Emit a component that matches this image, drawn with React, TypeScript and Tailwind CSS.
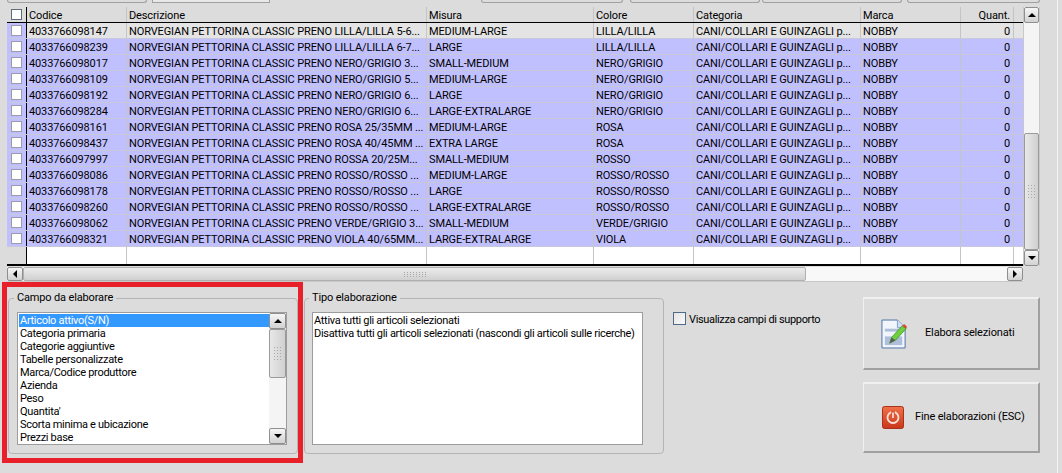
import React from "react";

const rows = [
  ["4033766098147", "NORVEGIAN PETTORINA CLASSIC PRENO LILLA/LILLA 5-6...", "MEDIUM-LARGE", "LILLA/LILLA"],
  ["4033766098239", "NORVEGIAN PETTORINA CLASSIC PRENO LILLA/LILLA 6-7...", "LARGE", "LILLA/LILLA"],
  ["4033766098017", "NORVEGIAN PETTORINA CLASSIC PRENO NERO/GRIGIO 3...", "SMALL-MEDIUM", "NERO/GRIGIO"],
  ["4033766098109", "NORVEGIAN PETTORINA CLASSIC PRENO NERO/GRIGIO 5...", "MEDIUM-LARGE", "NERO/GRIGIO"],
  ["4033766098192", "NORVEGIAN PETTORINA CLASSIC PRENO NERO/GRIGIO 6...", "LARGE", "NERO/GRIGIO"],
  ["4033766098284", "NORVEGIAN PETTORINA CLASSIC PRENO NERO/GRIGIO 6...", "LARGE-EXTRALARGE", "NERO/GRIGIO"],
  ["4033766098161", "NORVEGIAN PETTORINA CLASSIC PRENO ROSA 25/35MM ...", "MEDIUM-LARGE", "ROSA"],
  ["4033766098437", "NORVEGIAN PETTORINA CLASSIC PRENO ROSA 40/45MM ...", "EXTRA LARGE", "ROSA"],
  ["4033766097997", "NORVEGIAN PETTORINA CLASSIC PRENO ROSSA 20/25M...", "SMALL-MEDIUM", "ROSSO"],
  ["4033766098086", "NORVEGIAN PETTORINA CLASSIC PRENO ROSSO/ROSSO ...", "MEDIUM-LARGE", "ROSSO/ROSSO"],
  ["4033766098178", "NORVEGIAN PETTORINA CLASSIC PRENO ROSSO/ROSSO ...", "LARGE", "ROSSO/ROSSO"],
  ["4033766098260", "NORVEGIAN PETTORINA CLASSIC PRENO ROSSO/ROSSO ...", "LARGE-EXTRALARGE", "ROSSO/ROSSO"],
  ["4033766098062", "NORVEGIAN PETTORINA CLASSIC PRENO VERDE/GRIGIO 3...", "SMALL-MEDIUM", "VERDE/GRIGIO"],
  ["4033766098321", "NORVEGIAN PETTORINA CLASSIC PRENO VIOLA 40/65MM...", "LARGE-EXTRALARGE", "VIOLA"],
];

const campi = [
  "Articolo attivo(S/N)",
  "Categoria primaria",
  "Categorie aggiuntive",
  "Tabelle personalizzate",
  "Marca/Codice produttore",
  "Azienda",
  "Peso",
  "Quantita'",
  "Scorta minima e ubicazione",
  "Prezzi base",
];

const gridCols = "grid grid-cols-[20px_100px_300px_167px_100px_167px_100px_53px_8px]";
const cell = "border-r border-[#c4c4c4] pl-[2px] pr-[3px] overflow-hidden whitespace-nowrap";

function Arrow({ dir }: { dir: "up" | "down" | "left" | "right" }) {
  const pts = {
    up: "4,1 0,5 8,5",
    down: "0,1 8,1 4,5",
    left: "5,0 5,8 1,4",
    right: "1,0 1,8 5,4",
  }[dir];
  const horizontal = dir === "left" || dir === "right";
  return (
    <svg width={horizontal ? 6 : 8} height={horizontal ? 8 : 6} viewBox={horizontal ? "0 0 6 8" : "0 0 8 6"}>
      <polygon points={pts} fill="#000" />
    </svg>
  );
}

function ScrollButton({ dir, className }: { dir: "up" | "down" | "left" | "right"; className: string }) {
  return (
    <div className={`flex items-center justify-center shrink-0 border border-[#8e8f8f] rounded-[2px] bg-gradient-to-b from-[#f6f6f6] to-[#d2d2d2] ${className}`}>
      <Arrow dir={dir} />
    </div>
  );
}

function Grip({ vertical }: { vertical?: boolean }) {
  return (
    <div className={vertical ? "grid grid-cols-3 gap-[2px]" : "grid grid-rows-3 grid-flow-col gap-[1px] gap-x-[2px]"}>
      {Array.from({ length: vertical ? 15 : 24 }).map((_, i) => (
        <div key={i} className="w-px h-px bg-[#a8a8a8]" />
      ))}
    </div>
  );
}

function Check({ className = "" }: { className?: string }) {
  return <div className={`w-[11px] h-[11px] border border-[#5f6b78] bg-white ${className}`} />;
}

function Group({ title, className, children }: { title: string; className: string; children: React.ReactNode }) {
  return (
    <fieldset className={`border border-[#b4b4b4] rounded-[4px] ${className}`}>
      <legend className="-ml-[3px] px-[3px] leading-[14px] text-[11px] tracking-[-0.15px]">{title}</legend>
      {children}
    </fieldset>
  );
}

function ActionButton({ icon, label, className }: { icon: React.ReactNode; label: string; className: string }) {
  return (
    <div className={`w-[177px] flex items-center border-t-2 border-l border-t-[#f0f0f0] border-l-[#f0f0f0] border-r-2 border-b-2 border-r-[#a0a0a0] border-b-[#a0a0a0] bg-[#dcdcdc] ${className}`}>
      {icon}
      <span className="text-[11px] tracking-[-0.15px] whitespace-nowrap">{label}</span>
    </div>
  );
}

export default function App() {
  return (
    <div
      className="w-[1062px] h-[473px] overflow-hidden bg-[#dcdcdc] text-black tracking-[-0.3px] flex flex-col relative"
      style={{ fontFamily: 'Roboto, "Noto Sans", sans-serif' }}
    >
      {/* top tabs, only their lower edge is in the shot */}
      <div className="h-[3px] flex shrink-0 text-[0px]">
        <div className="ml-[7px] w-[140px] border-b border-x border-[#a0a0a0] rounded-b-[4px]" />
        <div className="ml-[5px] w-[118px] border-b border-x border-[#a0a0a0] bg-[#e8e8e8]" />
        <div className="ml-[211px] w-[142px] border-b border-x border-[#a0a0a0] rounded-b-[4px]" />
        <div className="ml-[7px] w-[130px] border-b border-x border-[#a0a0a0] rounded-b-[4px]" />
        <div className="ml-[2px] w-[140px] border-b border-x border-[#a0a0a0] rounded-b-[4px]" />
        <div className="ml-[5px] w-[133px] border-b border-x border-[#a0a0a0] rounded-b-[4px]" />
      </div>

      <div className="flex pl-[7px] pt-[4px] shrink-0 h-[263px]">
        <div className="w-[1016px] flex flex-col border-b-2 border-black text-[11px] leading-[17px] tracking-[-0.12px]">
          <div className={`${gridCols} h-[16px] bg-[#dcdcdc] border-b border-black shrink-0`}>
            <div className="border-r border-black flex items-center justify-center"><Check /></div>
            <div className={cell}>Codice</div>
            <div className={cell}>Descrizione</div>
            <div className={cell}>Misura</div>
            <div className={cell}>Colore</div>
            <div className={cell}>Categoria</div>
            <div className={cell}>Marca</div>
            <div className={`${cell} text-right`}>Quant.</div>
            <div />
          </div>
          {rows.map((r, i) => (
            <div key={r[0]} className={`${gridCols} h-[16px] shrink-0 border-b border-[#c8c8dc] ${i === 0 ? "bg-[#e4e4e4]" : "bg-[#c0c0ff]"}`}>
              <div className="border-r border-black bg-[#c0c0ff] flex items-center justify-center"><Check className="border-[#9a9aa8]" /></div>
              <div className={cell}>{r[0]}</div>
              <div className={cell}>{r[1]}</div>
              <div className={cell}>{r[2]}</div>
              <div className={cell}>{r[3]}</div>
              <div className={cell}>CANI/COLLARI E GUINZAGLI p...</div>
              <div className={cell}>NOBBY</div>
              <div className={`${cell} text-right`}>0</div>
              <div />
            </div>
          ))}
          <div className={`${gridCols} flex-1 bg-white`}>
            <div className="border-r border-black bg-[#dcdcdc]" />
            <div className={cell} />
            <div className={cell} />
            <div className={cell} />
            <div className={cell} />
            <div className={cell} />
            <div className={cell} />
            <div className={cell} />
            <div />
          </div>
        </div>

        {/* vertical scroll */}
        <div className="w-[17px] flex flex-col bg-[#f4f4f4] border-x border-[#c8c8c8]">
          <ScrollButton dir="up" className="h-[16px]" />
          <div className="flex-1 flex flex-col justify-end">
            <div className="h-[117px] border border-[#9a9a9a] rounded-[2px] bg-gradient-to-r from-[#e8e8e8] to-[#d0d0d0] flex items-center justify-center">
              <Grip vertical />
            </div>
          </div>
          <ScrollButton dir="down" className="h-[16px]" />
        </div>
      </div>

      {/* horizontal scroll */}
      <div className="ml-[7px] mt-[1px] w-[1016px] h-[15px] flex bg-[#f8f8f8] border-b border-[#c8c8c8] shrink-0">
        <ScrollButton dir="left" className="w-[16px]" />
        <div className="flex-1 flex">
          <div className="w-[783px] border border-[#b0b0b0] rounded-[2px] bg-gradient-to-b from-[#ececec] to-[#d0d0d0] flex items-center justify-center">
            <Grip />
          </div>
        </div>
        <ScrollButton dir="right" className="w-[16px]" />
      </div>

      {/* bottom section */}
      <div className="flex shrink-0">
        <div className="ml-[2px] w-[301px] h-[181px] border-[5px] border-[#e8202a] pl-px pt-[4px]">
          <Group title="Campo da elaborare" className="w-[290px] h-[163px] pl-[8px] pr-[10px]">
            <div className="mt-[7px] h-[133px] border border-[#9c9c9c] bg-white flex text-[11px] leading-[13px]">
              <div className="flex-1 pt-px">
                {campi.map((c, i) => (
                  <div key={c} className={i === 0 ? "h-[13px] ml-px bg-[#3399ff] text-white px-px" : "h-[13px] ml-px px-px"}>
                    {c}
                  </div>
                ))}
              </div>
              <div className="w-[17px] flex flex-col bg-[#f4f4f4]">
                <ScrollButton dir="up" className="h-[16px]" />
                <div className="h-[49px] border border-[#9a9a9a] rounded-[2px] bg-gradient-to-r from-[#e8e8e8] to-[#d0d0d0] flex items-center justify-center">
                  <Grip vertical />
                </div>
                <div className="flex-1" />
                <ScrollButton dir="down" className="h-[16px]" />
              </div>
            </div>
          </Group>
        </div>

        <div className="pt-[9px] ml-px">
          <Group title="Tipo elaborazione" className="w-[360px] h-[163px] pl-[7px] pr-[20px]">
            <div className="mt-[7px] h-[133px] border border-[#9c9c9c] bg-white text-[11px] leading-[13px] pl-px pt-px">
              <div>Attiva tutti gli articoli selezionati</div>
              <div>Disattiva tutti gli articoli selezionati (nascondi gli articoli sulle ricerche)</div>
            </div>
          </Group>
        </div>

        <div className="ml-[9px] pt-[30px] flex items-start gap-[3px] w-[190px]">
          <div className="w-[13px] h-[13px] border border-[#4e6a86] bg-gradient-to-br from-[#e4e4e4] to-[#fafafa]" />
          <span className="text-[11px] leading-[15px] tracking-[-0.35px] whitespace-nowrap">Visualizza campi di supporto</span>
        </div>

        <div className="pt-[15px] flex flex-col gap-[12px]">
          <ActionButton
            className="h-[73px] pl-[17px] gap-[17px]"
            label="Elabora selezionati"
            icon={
              <svg width="27" height="30" viewBox="0 0 28 31">
                <path d="M1 1h16l8 8v21H1z" fill="#f2f6fc" stroke="#4a6fa5" />
                <path d="M17 1v8h8" fill="#cfe0f4" stroke="#7d9cc8" />
                <rect x="4" y="10" width="18" height="3" fill="#aebfdc" />
                <rect x="4" y="18" width="18" height="9" fill="#aebfdc" />
                <path d="M9 25l2-6L22 7l4 3-11 12z" fill="#6fcf3f" stroke="#3e8f1e" strokeWidth="0.8" />
                <path d="M22 7l2-2 3 3-1 2z" fill="#d84a32" />
                <path d="M9 25l2-6 4 3z" fill="#5a5a5a" />
              </svg>
            }
          />
          <ActionButton
            className="h-[71px] pl-[18px] gap-[11px]"
            label="Fine elaborazioni (ESC)"
            icon={
              <svg width="22" height="23" viewBox="0 0 22 23">
                <defs>
                  <linearGradient id="fine" x1="0" y1="0" x2="0" y2="1">
                    <stop offset="0" stopColor="#f0714a" />
                    <stop offset="1" stopColor="#c9381a" />
                  </linearGradient>
                </defs>
                <rect x="0.5" y="0.5" width="21" height="22" rx="2" fill="url(#fine)" stroke="#a8321a" />
                <circle cx="11" cy="11.5" r="5.5" fill="none" stroke="#fbe4dc" strokeWidth="1.8" />
                <rect x="9.2" y="4.5" width="3.6" height="8" fill="#dc5533" />
                <rect x="10.2" y="6.5" width="1.6" height="5.5" fill="#fbe4dc" />
              </svg>
            }
          />
        </div>
      </div>

      {/* window edge on the right */}
      <div className="absolute top-0 bottom-0 right-[4px] w-px bg-[#f4f4f4]" />
    </div>
  );
}
